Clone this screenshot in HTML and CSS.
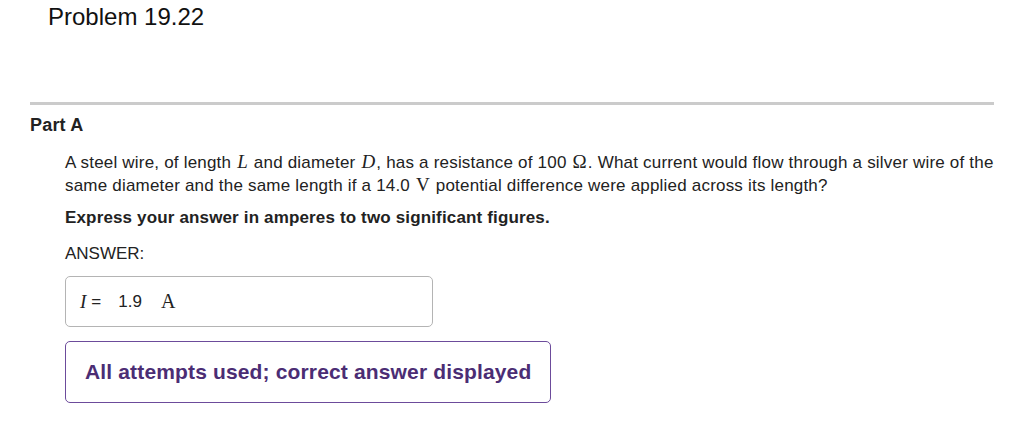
FILE: index.html
```html
<!DOCTYPE html>
<html lang="en">
<head>
<meta charset="utf-8">
<title>Problem 19.22</title>
<link rel="stylesheet" href="styles.css">
</head>
<body>
<h1 class="title">Problem 19.22</h1>
<hr class="rule">
<section class="part">
  <h2 class="part-title">Part A</h2>
  <div class="part-body">
    <p class="question">A steel wire, of length <span class="mi">L</span> and diameter <span class="mi">D</span>, has a resistance of 100 <span class="mo">Ω</span>. What current would flow through a silver wire of the same diameter and the same length if a 14.0 <span class="mo">V</span> potential difference were applied across its length?</p>
    <p class="instruction">Express your answer in amperes to two significant figures.</p>
    <p class="answer-label">ANSWER:</p>
    <div class="answer-box">
      <span class="mi">I</span><span class="eq">=</span><span class="val">1.9</span><span class="unit">A</span>
    </div>
    <div class="status">All attempts used; correct answer displayed</div>
  </div>
</section>
</body>
</html>
```

FILE: styles.css
```css
html, body {
  margin: 0;
  padding: 0;
  background: #ffffff;
}
body {
  font-family: "Liberation Sans", Arial, Helvetica, sans-serif;
  color: #222222;
}
.title {
  margin: 0 0 0 48px;
  padding-top: 3px;
  font-size: 24px;
  line-height: 28px;
  font-weight: normal;
  color: #111111;
}
.rule {
  margin: 71px 30px 0 30px;
  width: 964px;
  height: 3px;
  border: 0;
  background: #cbcbcb;
}
.part {
  margin-left: 30px;
}
.part-title {
  margin: 10px 0 0 0;
  font-size: 18px;
  line-height: 20px;
  letter-spacing: 0.2px;
  font-weight: bold;
  color: #222222;
}
.part-body {
  margin-left: 35px;
  width: 935px;
}
.question {
  margin: 16px 0 0 0;
  font-size: 17px;
  line-height: 22px;
  letter-spacing: 0.2px;
}
.mi {
  font-family: "Liberation Serif", "Times New Roman", serif;
  font-style: italic;
  font-size: 19px;
  margin: 0 1px;
}
.mo {
  font-family: "Liberation Serif", "Times New Roman", serif;
  font-size: 19px;
  margin: 0 1px;
}
.instruction {
  margin: 10px 0 0 0;
  font-size: 17px;
  line-height: 22px;
  letter-spacing: 0.15px;
  font-weight: bold;
}
.answer-label {
  margin: 14px 0 0 0;
  font-size: 17px;
  line-height: 22px;
}
.answer-box {
  margin-top: 11px;
  box-sizing: border-box;
  width: 368px;
  height: 51px;
  border: 1px solid #b4b4b4;
  border-radius: 5px;
  display: flex;
  align-items: center;
  padding-left: 14px;
  font-size: 17px;
}
.answer-box .mi {
  font-size: 19px;
  margin: 0;
}
.answer-box .eq {
  margin-left: 5px;
}
.answer-box .val {
  margin-left: 17px;
}
.answer-box .unit {
  margin-left: 19px;
  font-family: "Liberation Serif", "Times New Roman", serif;
  font-size: 20px;
}
.status {
  margin-top: 14px;
  box-sizing: border-box;
  width: 486px;
  height: 62px;
  border: 1.5px solid #6c4b9b;
  border-radius: 5px;
  display: flex;
  align-items: center;
  padding-left: 19px;
  font-size: 21px;
  letter-spacing: 0.15px;
  font-weight: bold;
  color: #4b2d74;
}
```
